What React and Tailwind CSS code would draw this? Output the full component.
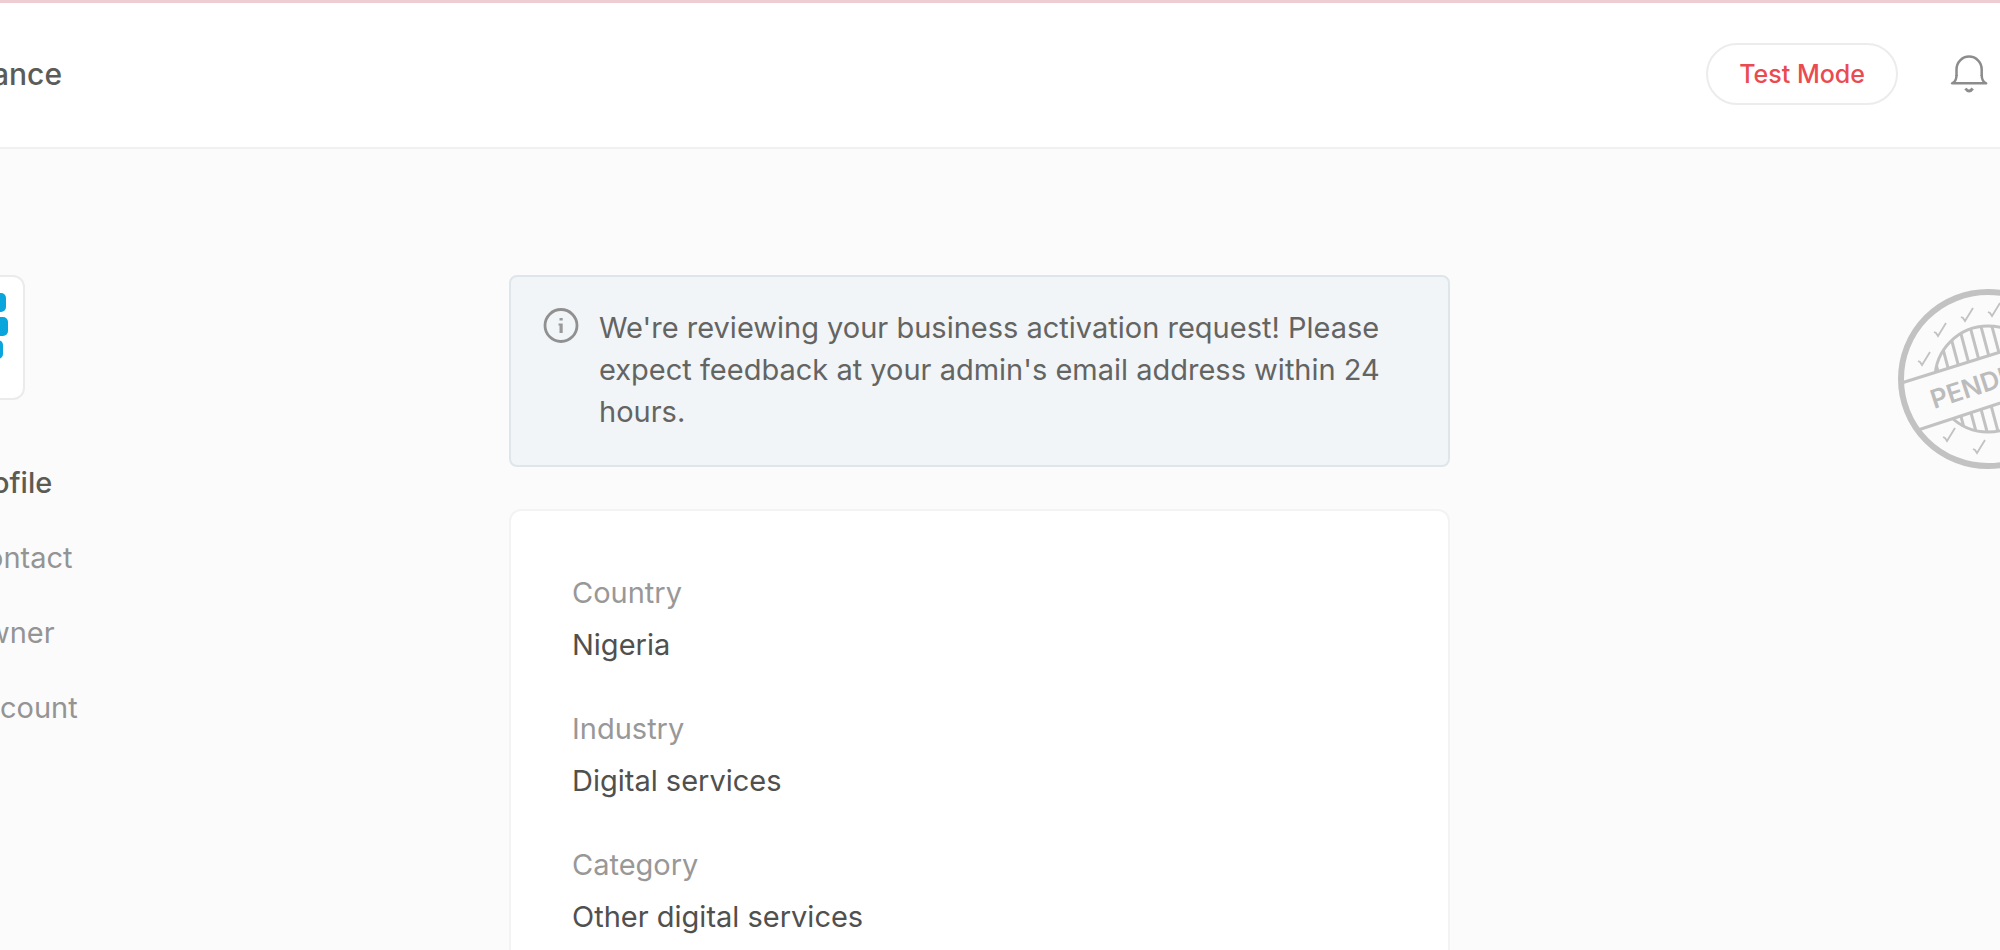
const navItems = [
  { label: "ofile", style: "-ml-2 font-medium text-[#5b5b54]" },
  { label: "ontact", style: "-ml-3.5 text-[#949494]" },
  { label: "wner", style: "-ml-3.5 text-[#949494]" },
  { label: "count", style: "text-[#949494]" },
];

const details = [
  { term: "Country", value: "Nigeria" },
  { term: "Industry", value: "Digital services" },
  { term: "Category", value: "Other digital services" },
];

function BellIcon() {
  return (
    <svg width="38" height="40" viewBox="0 0 38 40" fill="none" stroke="#8c8c8c" strokeWidth="2.500" aria-hidden="true">
      <path d="M6.500 22V15.500A12.600 13 0 0 1 31.700 15.500V22" />
      <path d="M6.500 21Q6.500 27.500 2 29.300H36.200Q31.700 27.500 31.700 21" strokeLinejoin="round" />
      <path d="M15.500 34.500Q19 39.500 22.700 34.500" strokeWidth="3" />
    </svg>
  );
}

function InfoIcon() {
  return (
    <svg className="shrink-0" width="36" height="36" viewBox="0 0 36 36" fill="none" aria-hidden="true">
      <circle cx="18" cy="18.500" r="16" stroke="#909090" strokeWidth="2.800" />
      <rect x="16.500" y="11" width="3.200" height="2.500" fill="#999" />
      <path d="M15.500 16.500H19.700V26H16.500V18.500H15.500Z" fill="#999" />
    </svg>
  );
}

function Logo() {
  return (
    <svg className="shrink-0" width="98" height="90" viewBox="0 0 98 90" fill="#0aa5dc" aria-hidden="true">
      <rect x="10" y="0" width="84" height="19" rx="5" />
      <rect x="10" y="24" width="86" height="19" rx="5" />
      <rect x="10" y="47" width="81" height="19" rx="5" />
    </svg>
  );
}

const bars = [34, 45, 56, 67, 78, 89, 100, 111, 122, 133, 144];

const ticks = [
  [20, 72],
  [36, 43],
  [63, 28],
  [90, 23],
  [117, 28],
  [45, 148],
  [75, 160],
  [105, 161],
];

function PendingStamp() {
  return (
    <svg className="shrink-0" width="180" height="180" viewBox="0 0 180 180" role="img" aria-label="Pending">
      <defs>
        <clipPath id="core">
          <circle cx="90" cy="90" r="53" />
        </clipPath>
      </defs>
      <g fill="none" stroke="#c2c2c2">
        <g clipPath="url(#core)" strokeWidth="3">
          {bars.map((x) => (
            <path key={x} d={`M${x - 8} 30L${x + 24} 150`} />
          ))}
        </g>
        <circle cx="90" cy="90" r="53" strokeWidth="3" />
        <path d="M5 93L166 42L181 88L20 141Z" fill="#fbfbfb" stroke="none" />
        <path d="M5 93.500L166 43M20 141L179 89" strokeWidth="3" />
        <circle cx="90" cy="90" r="87" strokeWidth="6" />
        <g strokeWidth="1.800">
          {ticks.map(([x, y]) => (
            <path key={x} d={`M${x} ${y}L${x + 2} ${y + 1}L${x + 4} ${y + 4}L${x + 12} ${y - 9}`} />
          ))}
        </g>
      </g>
      <text
        x="36"
        y="120"
        transform="rotate(-18 36 120)"
        fill="#bcbcbc"
        fontFamily="Inter, sans-serif"
        fontWeight="600"
        fontSize="26"
      >
        PENDING
      </text>
    </svg>
  );
}

export default function App() {
  return (
    <div className="flex min-h-screen flex-col overflow-hidden bg-[#fbfbfb] font-[Inter,sans-serif] text-[29px] leading-[42px] text-[#646462]">
      <header className="flex h-[149px] items-center justify-between border-t-3 border-b-2 border-t-[#eecdd2] border-b-[#f0f0f0] bg-white pr-3 pb-0.5">
        <h1 className="-ml-2 text-[30px] font-medium text-[#5b5b58]">ance</h1>
        <div className="flex items-center gap-[52px]">
          <button className="h-[62px] rounded-full border-2 border-[#ececec] px-[31px] text-[25px] font-medium text-[#ea4b50]">
            Test Mode
          </button>
          <button aria-label="Notifications">
            <BellIcon />
          </button>
        </div>
      </header>

      <main className="flex flex-1 pt-[126px]">
        <aside className="w-[509px] shrink-0">
          <div className="-ml-[100px] flex h-[125px] w-[125px] rounded-xl border-2 border-[#ebebeb] bg-white px-2.5 py-4">
            <Logo />
          </div>
          <nav className="mt-[62px] flex flex-col items-start gap-[33px]">
            {navItems.map(({ label, style }) => (
              <a key={label} href="#" className={style}>
                {label}
              </a>
            ))}
          </nav>
        </aside>

        <section className="flex flex-1 flex-col gap-[42px]">
          <div className="flex gap-5 rounded-lg border-2 border-[#dfe6e9] bg-[#f1f5f8] px-8 pt-[30px] pb-8">
            <InfoIcon />
            <p>
              We're reviewing your business activation request! Please expect feedback at your admin's email address
              within 24 hours.
            </p>
          </div>
          <dl className="flex flex-1 flex-col gap-[42px] rounded-t-xl border-2 border-b-0 border-[#f3f3f3] bg-white px-[61px] pt-[61px]">
            {details.map(({ term, value }) => (
              <div key={term} className="flex flex-col gap-2.5">
                <dt className="text-[#989898]">{term}</dt>
                <dd className="text-[#50504e]">{value}</dd>
              </div>
            ))}
          </dl>
        </section>

        <aside className="flex w-[550px] shrink-0 items-start justify-end overflow-hidden pt-[14px]">
          <div className="-mr-[78px] shrink-0">
            <PendingStamp />
          </div>
        </aside>
      </main>
    </div>
  );
}
